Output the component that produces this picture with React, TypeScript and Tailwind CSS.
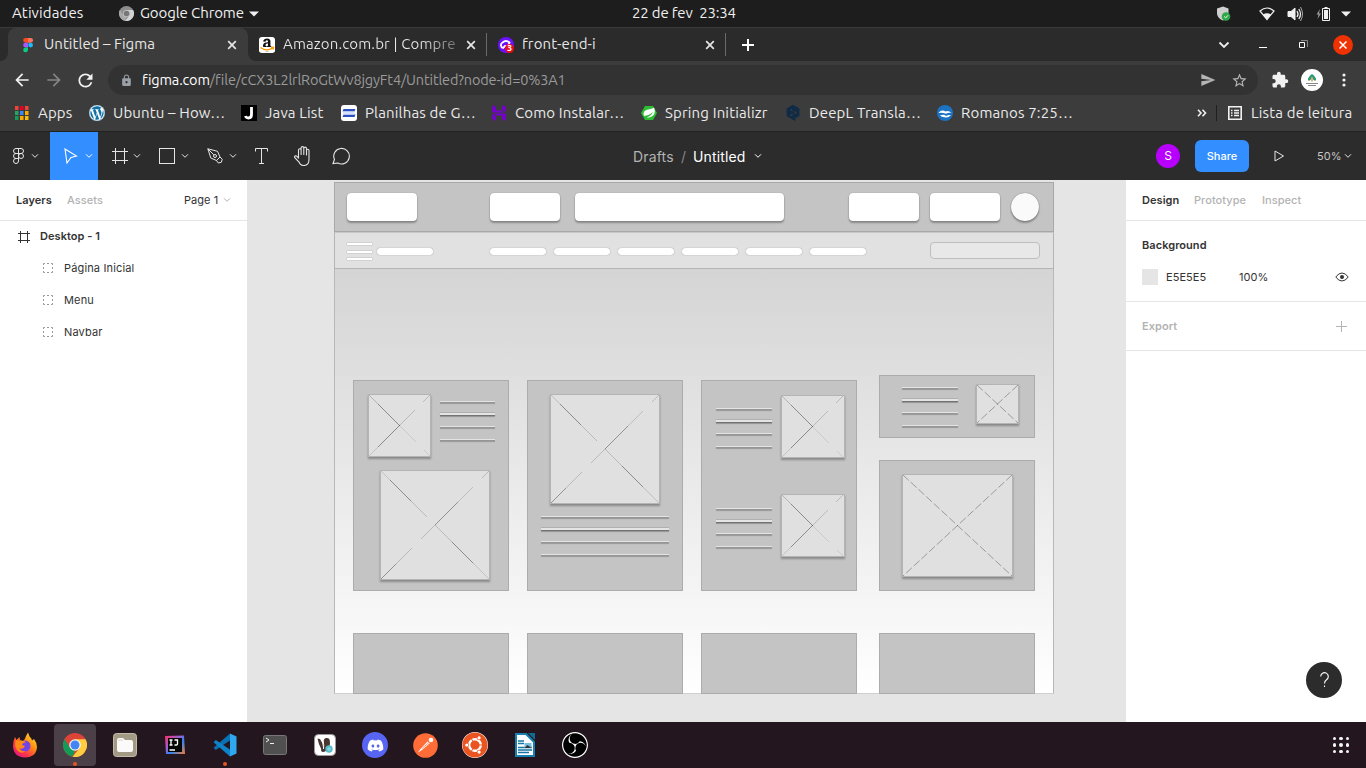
import React from "react";
import { FaAmazon, FaDiscord, FaUbuntu, FaWordpress } from "react-icons/fa";
import { SiHostinger, SiObsstudio, SiDeepl } from "react-icons/si";
import { MdExtension, MdStarBorder, MdLock, MdRefresh, MdArrowBack, MdArrowForward, MdSend } from "react-icons/md";

const ubuntu = "font-['Ubuntu','Noto_Sans',sans-serif]";

function Chevron({ className = "" }: { className?: string }) {
  return (
    <svg className={`shrink-0 ${className}`} width="8" height="6" viewBox="0 0 8 6" fill="none" stroke="currentColor">
      <path d="M1 1.3l3 3 3-3" />
    </svg>
  );
}

function CloseX() {
  return (
    <svg width="10" height="10" viewBox="0 0 10 10" stroke="#e6e6e6" strokeWidth="1.7" className="shrink-0">
      <path d="M1.2 1.2l7.6 7.6M8.8 1.2L1.2 8.8" />
    </svg>
  );
}

function ChromeLogo({ size, gray = false }: { size: number; gray?: boolean }) {
  const c = gray ? ["#8d8d8d", "#a9a9a9", "#d2d2d2", "#777777"] : ["#db4437", "#0f9d58", "#ffcd40", "#4285f4"];
  return (
    <svg width={size} height={size} viewBox="0 0 24 24" className="shrink-0">
      <circle cx="12" cy="12" r="12" fill={c[0]} />
      <path d="M1.6 6L6.9 15l5.1 2.8-2.6 5.9A12 12 0 0 1 1.6 6z" fill={c[1]} />
      <path d="M12 6.3h10.5A12 12 0 0 1 9.6 23.8l7.2-9z" fill={c[2]} />
      <circle cx="12" cy="12" r="5.8" fill={gray ? "#c4c4c4" : "#f3f3f3"} />
      <circle cx="12" cy="12" r="4.5" fill={c[3]} />
    </svg>
  );
}

function SystemBar() {
  return (
    <div className={`flex h-[27px] shrink-0 items-center bg-[#1d1d1d] text-[15px] text-[#f0f0f0] ${ubuntu}`}>
      <span className="w-[106px] shrink-0 pl-3 tracking-[0.12px]">Atividades</span>
      <span className="flex w-[526px] shrink-0 items-center pl-[13px]">
        <ChromeLogo size={15} gray />
        <span className="ml-[6px] w-[105px] whitespace-nowrap tracking-[-0.1px]">Google Chrome</span>
        <svg width="10" height="6" viewBox="0 0 10 6" fill="#f0f0f0" className="ml-1"><path d="M0 .5h10L5 5.5z" /></svg>
      </span>
      <span className="whitespace-pre tracking-[-0.17px]">22 de fev  23:34</span>
      <span className="ml-auto flex items-center pr-[15px]">
        <svg width="15" height="16" viewBox="0 0 15 16" className="mr-[28px]">
          <path d="M1 2.5L7 .5l5.5 2V7c0 4-2.5 6-5.5 7.5C3.5 13 1 10.5 1 7z" fill="#cfcfcf" />
          <circle cx="10" cy="10.5" r="4.3" fill="#2fa84a" />
          <path d="M8.2 10.5l1.4 1.4 2.4-2.6" stroke="#fff" fill="none" />
        </svg>
        <svg width="16" height="14" viewBox="0 0 16 14" className="mr-3">
          <path d="M1 4Q8-2 15 4L8 12.5z" fill="none" stroke="#f0f0f0" strokeWidth="1.2" />
          <path d="M4 7.5Q8 5 12 7.5L8 12.5z" fill="#f0f0f0" />
        </svg>
        <svg width="17" height="16" viewBox="0 0 17 16" className="mr-3" fill="none" stroke="#f0f0f0">
          <path d="M1 5.500h3L8 2v12l-4-3.500H1z" fill="#f0f0f0" />
          <path d="M10 5q2 3 0 6M11.800 3q3.400 5 0 10" strokeWidth="1.300" />
          <path d="M13.500 1q4 7 0 14" stroke="#aaa" />
        </svg>
        <svg width="15" height="16" viewBox="0 0 15 16" className="mr-[10px]">
          <path d="M4 3L.5 8.500H2.500L1.500 13 5 7.500H3z" fill="#999" />
          <path d="M6.500 2.500h7v12h-7z" fill="none" stroke="#f0f0f0" />
          <path d="M8 4h4v9H8zM8.500 1h3v1.500h-3z" fill="#f0f0f0" />
        </svg>
        <svg width="10" height="6" viewBox="0 0 10 6" fill="#f0f0f0"><path d="M0 .5h10L5 5.500z" /></svg>
      </span>
    </div>
  );
}

function FigmaMark() {
  return (
    <svg width="16" height="16" viewBox="0 0 16 16" className="shrink-0">
      <path d="M5.500 1H8v4.700H5.500a2.350 2.350 0 0 1 0-4.700z" fill="#f24e1e" />
      <path d="M8 1h2.700a2.350 2.350 0 0 1 0 4.700H8z" fill="#ff7262" />
      <path d="M5.500 5.700H8v4.700H5.500a2.350 2.350 0 0 1 0-4.700z" fill="#a259ff" />
      <circle cx="10.600" cy="8.050" r="2.400" fill="#1abcfe" />
      <path d="M5.500 10.400H8v2.300a2.400 2.400 0 1 1-2.500-2.300z" fill="#0acf83" />
    </svg>
  );
}

function TabStrip() {
  return (
    <div className={`flex h-[34px] shrink-0 items-center border-t border-[#3b3b3b] bg-[#2b2b2b] text-[15px] text-[#e6e6e6] ${ubuntu}`}>
      <div className="flex h-full w-2 items-end bg-[#3c3c3c]"><div className="h-full w-2 rounded-br-lg bg-[#2b2b2b]" /></div>
      <div className="flex h-full w-[240px] shrink-0 items-center rounded-t-lg bg-[#3c3c3c] pr-[11px] pl-3">
        <FigmaMark />
        <span className="ml-2 flex-1 whitespace-nowrap tracking-[0.04px]">Untitled – Figma</span>
        <CloseX />
      </div>
      <div className="h-full w-2 bg-[#3c3c3c]"><div className="h-full w-2 rounded-bl-lg bg-[#2b2b2b]" /></div>
      <div className="flex w-[231px] shrink-0 items-center border-r border-[#6a6a6a] pr-[10px] pl-[3px]">
        <span className="flex size-4 shrink-0 items-center justify-center rounded-[3px] bg-white">
          <svg width="16" height="16" viewBox="0 0 16 16">
            <FaAmazon size={15} x={0.5} y={0.5} color="#111" />
            <path d="M0 10h16v4.500H0z" fill="#fff" />
            <path d="M1.500 10.500q6.500 4.500 12 .5M12 10.200l2.500.2-.4 2.200" stroke="#f90" strokeWidth="1.400" fill="none" />
          </svg>
        </span>
        <span className="ml-2 w-[172px] overflow-hidden bg-linear-to-r from-[#e6e6e6] from-80% to-[#e6e6e6]/40 bg-clip-text tracking-[0.15px] whitespace-nowrap text-transparent">Amazon.com.br | Compre</span>
        <span className="ml-auto"><CloseX /></span>
      </div>
      <div className="flex w-[239px] shrink-0 items-center border-r border-[#6a6a6a] pr-[10px] pl-[11px]">
        <svg width="16" height="16" viewBox="0 0 16 16" className="shrink-0">
          <circle cx="8" cy="8" r="8" fill="#6a11ff" />
          <path d="M5 11a3 3 0 0 1-.5-5.500q3.500-3 7 0L10 9H7z" fill="none" stroke="#fff" strokeWidth="1.800" />
          <circle cx="11.500" cy="11.500" r="4.500" fill="#f00b18" />
          <text x="11.500" y="14.300" fill="#fff" textAnchor="middle" fontFamily="Noto Sans" fontWeight="700" fontSize="8">3</text>
        </svg>
        <span className="ml-2 whitespace-nowrap tracking-[0.15px]">front-end-i</span>
        <span className="ml-auto"><CloseX /></span>
      </div>
      <svg width="12" height="12" viewBox="0 0 12 12" stroke="#fff" strokeWidth="2" className="ml-4"><path d="M6 0v12M0 6h12" /></svg>
      <svg width="12" height="8" viewBox="0 0 12 8" stroke="#eee" strokeWidth="1.800" fill="none" className="ml-auto"><path d="M1.500 1.500L6 6l4.500-4.500" /></svg>
      <svg width="8" height="8" viewBox="0 0 8 8" className="ml-[29px]"><path d="M0 6h8v1H0z" fill="#fff" /></svg>
      <svg width="9" height="9" viewBox="0 0 9 9" fill="none" className="ml-8"><path d="M2 .5h6.500V7" stroke="#888" /><path d="M.500 2.500h5v5h-5z" stroke="#fff" /></svg>
      <span className="mr-[13px] ml-[25px] flex size-5 items-center justify-center rounded-full bg-[#ee3203]">
        <svg width="8" height="8" viewBox="0 0 8 8" stroke="#fff" strokeWidth="1.500"><path d="M.5.5l7 7M7.500.5l-7 7" /></svg>
      </span>
    </div>
  );
}

function AddressBar() {
  return (
    <div className={`flex h-9 shrink-0 items-center bg-[#3c3c3c] pt-[2px] text-[14.5px] ${ubuntu}`}>
      <MdArrowBack size={20} color="#f1f1f1" className="ml-3 shrink-0" />
      <MdArrowForward size={20} color="#858585" className="ml-3 shrink-0" />
      <MdRefresh size={21} color="#f1f1f1" className="ml-[11px] shrink-0" />
      <div className="ml-[12px] flex h-[30px] w-[1150px] shrink-0 items-center rounded-full bg-[#323232] pr-[10px] pl-3 text-[#9a9a9a]">
        <MdLock size={13} color="#9aa0a6" />
        <span className="ml-[9px] whitespace-nowrap tracking-[-0.15px]"><span className="text-white">figma.com</span>/file/cCX3L2lrlRoGtWv8jgyFt4/Untitled?node-id=0%3A1</span>
        <MdSend size={16} color="#b5b5b5" className="ml-auto" />
        <MdStarBorder size={17} color="#b5b5b5" className="ml-[15px]" />
      </div>
      <MdExtension size={18} color="#f1f1f1" className="ml-[13px] shrink-0" />
      <span className="ml-[12px] flex size-[22px] shrink-0 items-center justify-center rounded-full bg-white">
        <svg width="14" height="14" viewBox="0 0 14 14">
          <path d="M7 1l2 1.500 2 3v2H9L7 5 5 7.500H3v-2l2-3z" fill="#2b9c82" />
          <path d="M6.200 4h1.600v4.500H6.200z" fill="#e4a33a" />
          <path d="M1 10.500h12M3 12.500h8" stroke="#888" />
        </svg>
      </span>
      <svg width="4" height="14" viewBox="0 0 4 14" fill="#f1f1f1" className="ml-[19px] shrink-0"><circle cx="2" cy="2" r="1.600" /><circle cx="2" cy="7" r="1.600" /><circle cx="2" cy="12" r="1.600" /></svg>
    </div>
  );
}

function Bookmark({ icon, label, className }: { icon: React.ReactNode; label: string; className: string }) {
  return (
    <div className={`flex shrink-0 items-center gap-2 ${className}`}>
      {icon}
      <span className="whitespace-nowrap">{label}</span>
    </div>
  );
}

function Bookmarks() {
  const dots = ["#f14336", "#e60028", "#f14336", "#22a565", "#4285f4", "#f9ab00", "#0f9d58", "#f9ab00", "#fbbc05"];
  return (
    <div className={`flex h-[35px] shrink-0 items-center border-b border-[#222] bg-[#3c3c3c] pb-[2px] pl-[14px] text-[15px] tracking-[0.15px] text-[#eaeaea] ${ubuntu}`}>
      <Bookmark className="w-[75px]" label="Apps" icon={
        <svg width="16" height="14" viewBox="0 0 16 14">
          {dots.map((c, i) => <rect key={i} x={1 + (i % 3) * 5} y={Math.floor(i / 3) * 5} width="3.500" height="4" fill={c} />)}
        </svg>
      } />
      <Bookmark className="w-[152px]" label="Ubuntu – How…" icon={<span className="size-4 rounded-full bg-white"><FaWordpress size={16} color="#1070a8" /></span>} />
      <Bookmark className="w-[100px]" label="Java List" icon={
        <svg width="16" height="16" viewBox="0 0 16 16"><path d="M0 0h16v16H0z" fill="#000" /><path d="M10.500 2v7.500q0 3.500-3 3.500-2.500 0-3-2" fill="none" stroke="#fff" strokeWidth="2.800" /></svg>
      } />
      <Bookmark className="w-[150px]" label="Planilhas de G…" icon={
        <svg width="16" height="16" viewBox="0 0 16 16"><rect width="16" height="16" rx="3" fill="#fff" /><path d="M2.500 4h12l-1 2.500h-12zM2.500 9.500h12l-1 2.500h-12z" fill="#2c4fc0" /><path d="M2 6.500h11.500v3H2z" fill="#d5e3ff" /></svg>
      } />
      <Bookmark className="w-[150px]" label="Como Instalar…" icon={<SiHostinger size={16} color="#7600d1" />} />
      <Bookmark className="w-[144px]" label="Spring Initializr" icon={
        <svg width="16" height="16" viewBox="0 0 16 16"><path d="M4 1h8l4 7-4 7H4L0 8z" fill="#2cbd35" /><path d="M3 11C1 5 7 4.500 9.500 4 12 3.500 13 2.500 13 2.500 16 10 10 13 5.500 12.500 9 11.500 11 9.500 12 7 9 10 6 10.500 3 11z" fill="#fff" /></svg>
      } />
      <Bookmark className="w-[152px]" label="DeepL Transla…" icon={<SiDeepl size={16} color="#0f2b46" />} />
      <Bookmark className="w-[150px]" label="Romanos 7:25…" icon={
        <svg width="16" height="16" viewBox="0 0 16 16"><circle cx="8" cy="8" r="8" fill="#1c73c3" /><path d="M1.500 8q3-4 7-1.500 3-1.500 6 1.500-3-.8-5.500.8Q5 7 1.500 8zM3 10.500q4-1.500 6 .5 2-1.500 5-.8-3.500 3-6 2Q5 12.500 3 10.500z" fill="#fff" /></svg>
      } />
      <svg width="10" height="8" viewBox="0 0 10 8" fill="none" stroke="#f1f1f1" strokeWidth="1.600" className="ml-[110px] shrink-0"><path d="M1 .8L4 4 1 7.200M5.500.8L8.500 4l-3 3.200" /></svg>
      <div className="ml-[9px] h-4 w-px bg-[#202020]" />
      <svg width="14" height="14" viewBox="0 0 14 14" fill="none" stroke="#f1f1f1" strokeWidth="1.600" className="ml-[11px] shrink-0"><path d="M.8.8h12.400v12.400H.8z" /><path d="M3 4.500h1.500M3 7h1.500M3 9.500h1.500M6 4.500h5M6 7h5M6 9.500h5" strokeWidth="1.400" /></svg>
      <span className="ml-[9px] whitespace-nowrap">Lista de leitura</span>
    </div>
  );
}

function Toolbar() {
  return (
    <div className="flex h-12 shrink-0 items-center bg-[#2c2c2c] font-['Inter',sans-serif] text-[11px] text-[#e5e5e5]">
      <div className="flex h-full w-[50px] shrink-0 items-center pl-[13px]">
        <svg width="11" height="16" viewBox="0 0 11 16" fill="none" stroke="currentColor">
          <path d="M5.500.5H3a2.500 2.500 0 0 0 0 5h2.500zM5.500.5H8a2.500 2.500 0 0 1 0 5H5.500zM5.500 5.500H3a2.500 2.500 0 0 0 0 5h2.500zM5.500 10.500H3A2.500 2.500 0 1 0 5.500 13z" /><circle cx="8" cy="8" r="2.500" />
        </svg>
        <Chevron className="ml-[7px]" />
      </div>
      <div className="flex h-full w-12 shrink-0 items-center bg-[#338eff] pl-[14px] text-white">
        <svg width="14" height="16" viewBox="0 0 14 16" fill="none" stroke="currentColor" strokeWidth="1.100"><path d="M1 1l11.500 7L7 9.500 3 15z" /></svg>
        <Chevron className="ml-[7px]" />
      </div>
      <svg width="16" height="16" viewBox="0 0 16 16" stroke="currentColor" className="ml-[14px] shrink-0"><path d="M3.500 0v16M12.500 0v16M0 3.500h16M0 12.500h16" /></svg>
      <Chevron className="ml-[5px]" />
      <div className="ml-[18px] size-4 shrink-0 border border-current" />
      <Chevron className="ml-[6px]" />
      <svg width="16" height="16" viewBox="0 0 16 16" fill="none" stroke="currentColor" className="ml-[18px] shrink-0"><path d="M.8.8l9.700 2.500 2.500 5.700-3.500 3.500-5.700-2.500zM.8.8l6 6M9.500 12.500L13 9l2.300 2.300-1 3-3 .7z" /><circle cx="8" cy="8" r="1.500" /></svg>
      <Chevron className="ml-[6px]" />
      <svg width="13" height="16" viewBox="0 0 13 16" fill="none" stroke="currentColor" className="ml-[18px] shrink-0"><path d="M.5 3.500v-3h12v3M6.500.5v15M4 15.500h5" /></svg>
      <svg width="18" height="20" viewBox="0 0 18 20" fill="none" stroke="currentColor" strokeWidth="1.100" strokeLinecap="round" className="ml-[25px] shrink-0"><path d="M4.500 12V4a1.300 1.300 0 0 1 2.600 0v4.500M7.100 8.500V2a1.300 1.300 0 0 1 2.700 0v6.500M9.800 8.500V2.500a1.300 1.300 0 0 1 2.700 0V9M12.500 9V4.500a1.250 1.250 0 0 1 2.500 0V13q0 6.500-5 6.500-3.500 0-5-3.500L.8 11.700c-.8-1.500 1-2.700 2.200-1.300l1.500 1.800" transform="translate(1 0)" /></svg>
      <svg width="18" height="18" viewBox="0 0 18 18" fill="none" stroke="currentColor" strokeWidth="1.100" className="ml-[21px] shrink-0"><path d="M1 16.500l1.500-4A7.800 7.800 0 1 1 5.800 16z" /></svg>
      <div className="ml-[283px] flex shrink-0 items-center text-[14px]">
        <span className="w-[41px] tracking-[0.15px] text-[#b3b3b3]">Drafts</span>
        <span className="mx-[7px] text-[#858585]">/</span>
        <span className="w-[54px] tracking-[0.12px] text-white">Untitled</span>
        <Chevron className="ml-[7px] text-white" />
      </div>
      <span className="ml-auto flex size-6 items-center justify-center rounded-full bg-[#b800ff] text-[12px] text-white">S</span>
      <span className="ml-[15px] flex h-8 w-[54px] items-center justify-center rounded-md bg-[#338eff] font-medium text-white">Share</span>
      <svg width="11" height="12" viewBox="0 0 11 12" fill="none" stroke="currentColor" className="ml-[25px]"><path d="M1 1v10l8.500-5z" /></svg>
      <span className="ml-[32px] w-[22px] text-[#c6c6c6]">50%</span>
      <Chevron className="mr-[14px] ml-[5px]" />
    </div>
  );
}

function LayersPanel() {
  return (
    <aside className="w-[247px] shrink-0 bg-white text-[11px] tracking-[0.055px] text-[#333]">
      <div className="flex h-[41px] items-center border-b border-[#e5e5e5] pl-4">
        <span className="w-[51px] font-semibold">Layers</span>
        <span className="w-[117px] font-medium text-[#b3b3b3]">Assets</span>
        <span className="w-[39px]">Page 1</span>
        <Chevron className="text-[#b3b3b3]" />
      </div>
      <div className="flex h-[31px] items-center pl-[18px] font-semibold">
        <svg width="12" height="12" viewBox="0 0 12 12" stroke="#333" className="mr-[10px]"><path d="M2.500 0v12M9.500 0v12M0 2.500h12M0 9.500h12" /></svg>
        Desktop - 1
      </div>
      {["Página Inicial", "Menu", "Navbar"].map((name) => (
        <div key={name} className="flex h-8 items-center pl-[43px] tracking-[0.15px]">
          <svg width="10" height="10" viewBox="0 0 10 10" fill="none" stroke="#999" className="mr-[11px]"><path d="M.5 2V.5H2M4 .5h2M8 .5h1.500V2M9.500 4v2M9.500 8v1.500H8M6 9.500H4M2 9.500H.5V8M.5 6V4" /></svg>
          {name}
        </div>
      ))}
    </aside>
  );
}

/* Diagonal strokes fade in and out along their length: [x1, y1, x2, y2, strength]. */
type Seg = [number, number, number, number, number];
const smallCross: Seg[] = [
  [0, 0, 9, 9, 0.28], [9, 9, 31, 31, 0.55], [31, 31, 47, 47, 0.14], [55, 55, 61, 61, 0.14],
  [61, 0, 54, 7, 0.25], [46, 15, 31, 30, 0.25], [31, 30, 9, 52, 0.55], [9, 52, 0, 61, 0.18],
];
const bigCross: Seg[] = [
  [0, 0, 9, 9, 0.2], [9, 9, 30, 30, 0.55], [30, 30, 46, 46, 0.25], [54, 54, 71, 71, 0.25], [71, 71, 92, 92, 0.55], [92, 92, 108, 108, 0.2],
  [108, 0, 101, 7, 0.25], [92, 16, 77, 31, 0.22], [77, 31, 54, 54, 0.5], [54, 54, 40, 68, 0.25], [31, 77, 15, 93, 0.25], [15, 93, 0, 108, 0.5],
];

function Picture({ className, w, h, segs }: { className: string; w: number; h: number; segs?: Seg[] }) {
  return (
    <div className={`absolute border border-[#b4b4b4] bg-[#e0e0e0] shadow-[0_2px_2px_rgba(0,0,0,0.3)] ${className}`}>
      <svg width={w - 2} height={h - 2} viewBox={`0 0 ${w - 2} ${h - 2}`} fill="none" stroke="#444" className="block">
        {segs
          ? segs.map(([x1, y1, x2, y2, o], i) => <line key={i} x1={x1} y1={y1} x2={x2} y2={y2} strokeOpacity={o} />)
          : <path d={`M0 0L${w - 2} ${h - 2}M${w - 2} 0L0 ${h - 2}`} strokeOpacity="0.5" strokeWidth="0.9" strokeDasharray="8 2.5" />}
      </svg>
    </div>
  );
}

function TextLines({ className }: { className: string }) {
  const line = "bg-[#e4e4e4] shadow-[0_1px_0_rgba(0,0,0,0.22),0_2px_1px_rgba(0,0,0,0.25)]";
  return (
    <div className={`absolute ${className}`}>
      <div className={`h-px ${line}`} />
      <div className={`mt-[10px] h-[3px] border-t border-[#b0b0b0] ${line}`} />
      <div className={`mt-[11px] h-px ${line}`} />
      <div className={`mt-3 h-px ${line}`} />
    </div>
  );
}

const card = "absolute border border-[#acacac] bg-[#c4c4c4]";
const field = "absolute h-[28px] rounded-[4px] bg-white shadow-[0_2px_2px_rgba(0,0,0,0.3),0_0_1px_rgba(0,0,0,0.4)]";
const pill = "absolute top-[66px] h-[7px] w-[56px] rounded-[3px] bg-white shadow-[0_0_1px_rgba(0,0,0,0.5)]";
const burger = "absolute left-[13px] h-[2px] w-[25px] bg-white shadow-[0_0_1px_rgba(0,0,0,0.7)]";

function Canvas() {
  return (
    <main className="relative min-w-0 flex-1 overflow-hidden bg-[#e5e5e5]">
      <div className="absolute top-[2px] left-[87px] h-[512px] w-[720px] bg-linear-to-b from-[#cccccc] to-white">
        <div className="absolute inset-0 border border-[#b8b8b8] border-b-[#d0d0d0]" />
        <div className="absolute top-0 left-0 h-[50px] w-[720px] border border-[#a8a8a8] bg-[#c4c4c4]" />
        <div className="absolute top-[50px] left-0 h-[37px] w-[720px] border border-t-[#c8c8c8] border-r-[#b4b4b4] border-b-[#b4b4b4] border-l-[#b4b4b4] bg-[#e1e1e1]" />
        <div className={`${field} top-[11px] left-[13px] w-[70px]`} />
        <div className={`${field} top-[11px] left-[156px] w-[70px]`} />
        <div className={`${field} top-[11px] left-[241px] w-[209px]`} />
        <div className={`${field} top-[10.500px] left-[515px] w-[70px]`} />
        <div className={`${field} top-[10.500px] left-[596px] w-[70px]`} />
        <div className="absolute top-[11px] left-[677px] size-[28px] rounded-full bg-[#fafafa] shadow-[0_2px_2px_rgba(0,0,0,0.3),0_0_1px_rgba(0,0,0,0.6)]" />
        <div className={`${burger} top-[61px]`} />
        <div className={`${burger} top-[69px]`} />
        <div className={`${burger} top-[76px]`} />
        <div className={`${pill} left-[43px]`} />
        <div className={`${pill} left-[156px]`} />
        <div className={`${pill} left-[220px]`} />
        <div className={`${pill} left-[284px]`} />
        <div className={`${pill} left-[348px]`} />
        <div className={`${pill} left-[412px]`} />
        <div className={`${pill} left-[476px]`} />
        <div className="absolute top-[60px] left-[596px] h-[17px] w-[110px] rounded-[4px] border border-[#bebebe] bg-[#e8e8e8]" />

        <div className={`${card} top-[198px] left-[19px] h-[211px] w-[156px]`} />
        <Picture className="top-[212px] left-[34px]" w={63} h={63} segs={smallCross} />
        <TextLines className="top-[219px] left-[106px] w-[55px]" />
        <Picture className="top-[288px] left-[46px]" w={110} h={110} segs={bigCross} />

        <div className={`${card} top-[198px] left-[193px] h-[211px] w-[156px]`} />
        <Picture className="top-[212px] left-[216px]" w={110} h={110} segs={bigCross} />
        <TextLines className="top-[334px] left-[207px] w-[128px]" />

        <div className={`${card} top-[198px] left-[367px] h-[211px] w-[156px]`} />
        <TextLines className="top-[226px] left-[382px] w-[56px]" />
        <Picture className="top-[213px] left-[447px]" w={64} h={63} segs={smallCross} />
        <TextLines className="top-[326px] left-[382px] w-[56px]" />
        <Picture className="top-[312px] left-[447px]" w={64} h={63} segs={smallCross} />

        <div className={`${card} top-[193px] left-[545px] h-[63px] w-[156px]`} />
        <TextLines className="top-[205px] left-[568px] w-[56px]" />
        <Picture className="top-[202px] left-[642px]" w={43} h={40} />
        <div className={`${card} top-[278px] left-[545px] h-[131px] w-[156px]`} />
        <Picture className="top-[292px] left-[568px]" w={111} h={103} />

        <div className={`${card} top-[451px] left-[19px] h-[61px] w-[156px]`} />
        <div className={`${card} top-[451px] left-[193px] h-[61px] w-[156px]`} />
        <div className={`${card} top-[451px] left-[367px] h-[61px] w-[156px]`} />
        <div className={`${card} top-[451px] left-[545px] h-[61px] w-[156px]`} />
      </div>
    </main>
  );
}

function DesignPanel() {
  return (
    <aside className="relative w-60 shrink-0 bg-white text-[11px] tracking-[0.055px] text-[#333]">
      <div className="flex h-[41px] items-center border-b border-[#e5e5e5] pl-4 font-medium text-[#b3b3b3]">
        <span className="w-[52px] font-semibold text-[#333]">Design</span>
        <span className="w-[68px]">Prototype</span>
        <span>Inspect</span>
      </div>
      <div className="h-[81px] border-b border-[#e5e5e5] pt-2 pr-[17px] pl-4">
        <div className="flex h-8 items-center font-semibold">Background</div>
        <div className="flex h-8 items-center">
          <div className="mr-2 size-4 bg-[#e5e5e5]" />
          <span className="w-[73px]">E5E5E5</span>
          <span>100%</span>
          <svg width="14" height="10" viewBox="0 0 14 10" fill="none" stroke="#333" className="ml-auto"><path d="M.8 5Q3.500 1 7 1t6.200 4Q10.500 9 7 9T.8 5z" /><circle cx="7" cy="5" r="2" fill="#333" stroke="none" /></svg>
        </div>
      </div>
      <div className="flex h-[49px] items-center justify-between border-b border-[#e5e5e5] pr-[19px] pl-4 font-semibold text-[#b3b3b3]">
        Export
        <svg width="11" height="11" viewBox="0 0 11 11" stroke="#b3b3b3"><path d="M5.500 0v11M0 5.500h11" /></svg>
      </div>
      <div className="absolute right-6 bottom-6 flex size-9 items-center justify-center rounded-full bg-[#2c2c2c]">
        <svg width="9" height="16" viewBox="0 0 9 16" fill="none" stroke="#fff" strokeWidth="1.100"><path d="M.7 4.500a3.800 3.800 0 1 1 5.800 3.200Q4.500 9 4.500 11.500" /><path d="M4.500 13.500v1.500" /></svg>
      </div>
    </aside>
  );
}

function DockItem({ children, active = false, running = false }: { children: React.ReactNode; active?: boolean; running?: boolean }) {
  return (
    <div className="relative flex h-full w-[50px] items-center justify-center">
      <div className={`flex size-[42px] items-center justify-center rounded ${active ? "bg-[#4b3f48]" : ""}`}>{children}</div>
      {running && <div className="absolute bottom-[2px] left-[23px] size-1 rounded-full bg-[#e95420]" />}
    </div>
  );
}

function Dock() {
  return (
    <div className="flex h-[46px] shrink-0 items-center bg-[#24161f]">
      <DockItem>
        <svg width="26" height="26" viewBox="0 0 26 26">
          <defs><linearGradient id="fx" x1="1" y1="0" x2="0.200" y2="1"><stop offset="0" stopColor="#fff44f" /><stop offset=".4" stopColor="#ff980e" /><stop offset=".75" stopColor="#ff3647" /><stop offset="1" stopColor="#e31587" /></linearGradient></defs>
          <path d="M3 5l1.500 3 3-3 .5 3 3 1q2-1 3-5l2-3.500 1.500 4q2 1.500 2.500 4L22 7q3 4 3 8-.5 10-12 10.500Q1.500 25 1 14q0-5 2-9z" fill="url(#fx)" />
          <circle cx="13" cy="14" r="5.500" fill="#7542e5" />
          <path d="M4 8l4 1q4-1 6 1.500-4 0-4 2.500l3 1q-2 4-6 2 2 4 7 3-5 4-9-1Q2 14 4 8z" fill="#ff8a16" />
        </svg>
      </DockItem>
      <DockItem active running><ChromeLogo size={24} /></DockItem>
      <DockItem>
        <svg width="24" height="24" viewBox="0 0 24 24"><rect x=".5" y=".5" width="23" height="23" rx="3" fill="#a39a86" stroke="#c3bba8" /><path d="M4 7q0-2 2-2h4l2 2h6q2 0 2 2v8q0 2-2 2H6q-2 0-2-2z" fill="#fbfaf8" /><path d="M5 7h5" stroke="#d8d2c6" /></svg>
      </DockItem>
      <DockItem>
        <svg width="20" height="20" viewBox="0 0 20 20">
          <defs><linearGradient id="ij" x1="0" y1="0" x2="1" y2="1"><stop offset="0" stopColor="#fe2d68" /><stop offset=".4" stopColor="#9a62d8" /><stop offset=".6" stopColor="#2b84f5" /><stop offset="1" stopColor="#f97a35" /></linearGradient></defs>
          <path d="M0 1l19-.5L20 19H1z" fill="url(#ij)" /><path d="M3 3h14v14H3z" fill="#050505" />
          <path d="M4.500 5h3M6 5v5M4.500 10h3M9.500 5h3v4q0 1-1.200 1H9.500M4.500 15H10" fill="none" stroke="#fff" strokeWidth="1.300" />
        </svg>
      </DockItem>
      <DockItem running>
        <svg width="24" height="24" viewBox="0 0 24 24"><path d="M17 .5L.6 14.800l2.200 2.100L18 6.800z" fill="#0a71b4" /><path d="M17 23.500L.6 9.200l2.200-2.100L18 17.200z" fill="#0f83c8" /><path d="M17 .5l6.500 3v17l-6.500 3z" fill="#2ea8ef" /></svg>
      </DockItem>
      <DockItem>
        <svg width="24" height="20" viewBox="0 0 24 20"><rect x=".5" y=".5" width="23" height="19" rx="2" fill="#505050" stroke="#777" /><path d="M3 3l3 2-3 2M7 8.500h4" fill="none" stroke="#eee" /></svg>
      </DockItem>
      <DockItem>
        <svg width="22" height="22" viewBox="0 0 22 22"><rect x=".5" y=".5" width="21" height="21" rx="4" fill="#fff" stroke="#999" /><path d="M3.500 4.500l2.500.5q2.500 3 3 8l.800-4q-.8-4 2-5 4-.5 4 3 1 5-2.500 8.500-2.500 3-5 2.500-1.500-1-1.300-3.500Q4.500 10 3.500 4.500z" fill="#48362e" /><path d="M8.800 6.500q1.500 4 .7 8.500" stroke="#fff" strokeWidth="1" fill="none" /><circle cx="15" cy="15" r="3.700" fill="#55bccb" /><path d="M13 15h4M15 13v4" stroke="#a9e0e6" strokeWidth=".8" /></svg>
      </DockItem>
      <DockItem><span className="flex size-[26px] items-center justify-center rounded-full bg-[#5865f2]"><FaDiscord size={17} color="#fff" /></span></DockItem>
      <DockItem>
        <svg width="25" height="25" viewBox="0 0 25 25"><circle cx="12.500" cy="12.500" r="12.300" fill="#ff6c37" /><circle cx="18" cy="7" r="2.300" fill="#fff" /><path d="M5 19.500l2-3 7.500-8 2.300 1.800-7.800 6.700z" fill="#fff" /><path d="M9 15.500l7-6" stroke="#ff6c37" strokeWidth=".7" /></svg>
      </DockItem>
      <DockItem><span className="size-[26px] rounded-full bg-white"><FaUbuntu size={26} color="#e95420" /></span></DockItem>
      <DockItem>
        <svg width="22" height="24" viewBox="0 0 22 24"><path d="M2 1h10l8 8v14H2z" fill="#fff" stroke="#1880b0" strokeWidth="2" /><path d="M14 0h7v7z" fill="#126992" /><path d="M4 8h6M4 10.500h6M4 14.500h14M4 17h14M4 19.500h11" stroke="#1476a4" strokeWidth="1.400" /><path d="M10.500 10h7v5h-7z" fill="#75bdde" /><path d="M10.500 15l3-3 4 3z" fill="#333" /></svg>
      </DockItem>
      <DockItem><span className="flex size-[26px] items-center justify-center rounded-full bg-black"><SiObsstudio size={26} color="#fff" /></span></DockItem>
      <div className="mr-[17px] ml-auto grid grid-cols-3 gap-[3px]">
        {Array.from({ length: 9 }, (_, i) => <i key={i} className="size-[3.500px] rounded-full bg-[#f5f5f5]" />)}
      </div>
    </div>
  );
}

export default function App() {
  return (
    <div className="flex h-[768px] w-[1366px] flex-col overflow-hidden">
      <SystemBar />
      <TabStrip />
      <AddressBar />
      <Bookmarks />
      <Toolbar />
      <div className="flex min-h-0 flex-1 font-['Inter',sans-serif]">
        <LayersPanel />
        <Canvas />
        <DesignPanel />
      </div>
      <Dock />
    </div>
  );
}
